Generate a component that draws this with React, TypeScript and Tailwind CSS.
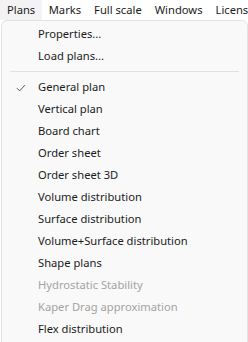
import React from "react";

const items1 = ["Properties...", "Load plans..."];
const items2: { label: string; checked?: boolean; disabled?: boolean }[] = [
  { label: "General plan", checked: true },
  { label: "Vertical plan" },
  { label: "Board chart" },
  { label: "Order sheet" },
  { label: "Order sheet 3D" },
  { label: "Volume distribution" },
  { label: "Surface distribution" },
  { label: "Volume+Surface distribution" },
  { label: "Shape plans" },
  { label: "Hydrostatic Stability", disabled: true },
  { label: "Kaper Drag approximation", disabled: true },
  { label: "Flex distribution" },
];

function Row({ label, checked, disabled }: { label: string; checked?: boolean; disabled?: boolean }) {
  return (
    <div className="flex h-[22px] items-center whitespace-nowrap">
      <div className="flex w-[36px] items-center justify-center pl-[2px]">
        {checked && (
          <svg width="10" height="8" viewBox="0 0 10 8" className="mt-[1px]">
            <path d="M1 4.2 L3.6 6.8 L9 1.2" fill="none" stroke="#555" strokeWidth="1" />
          </svg>
        )}
      </div>
      <span className={disabled ? "text-[#a3a3a3]" : "text-[#1b1b1b]"}>{label}</span>
    </div>
  );
}

export default function App() {
  return (
    <div
      className="relative h-[342px] w-[248px] overflow-hidden bg-white text-[11.2px] leading-none"
      style={{ fontFamily: '"Noto Sans", "Open Sans", sans-serif' }}
    >
      <div className="flex h-[20px] items-center whitespace-nowrap bg-white text-[#1b1b1b]">
        <div className="flex h-full items-center bg-[#f3f3f3] px-[7px]">Plans</div>
        <div className="flex h-full items-center px-[6.5px]">Marks</div>
        <div className="flex h-full items-center px-[6.5px]">Full scale</div>
        <div className="flex h-full items-center px-[6.5px]">Windows</div>
        <div className="flex h-full items-center px-[6.5px]">License</div>
      </div>
      <div className="ml-[1px] h-[330px] rounded-tl-[6px] rounded-tr-[6px] border border-[#e3e3e3] bg-[#f9f9f9] pt-[2px]">
        {items1.map((l) => (
          <Row key={l} label={l} />
        ))}
        <div className="flex h-[9px] items-center px-[8px]">
          <div className="h-px w-full bg-[#e0e0e0]" />
        </div>
        {items2.map((it) => (
          <Row key={it.label} {...it} />
        ))}
      </div>
    </div>
  );
}
